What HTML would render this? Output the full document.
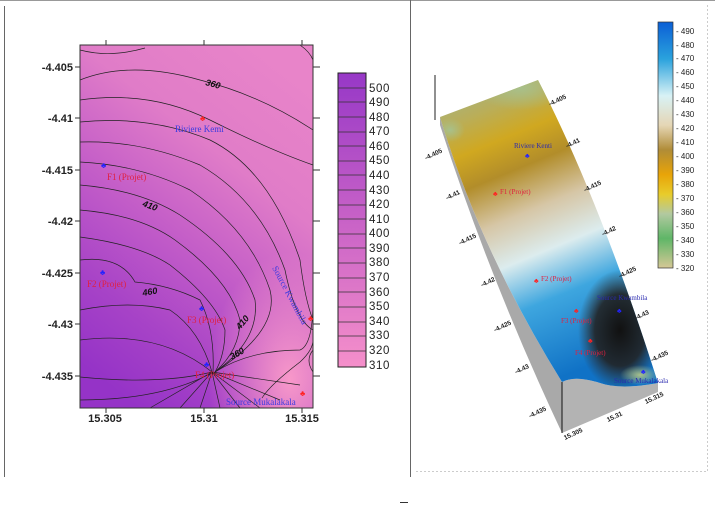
<!DOCTYPE html>
<html><head><meta charset="utf-8"><style>
html,body{margin:0;padding:0;background:#fff;width:715px;height:508px;overflow:hidden}
svg{display:block}
</style></head><body>
<svg width="715" height="508" viewBox="0 0 715 508" xmlns="http://www.w3.org/2000/svg" font-family="Liberation Sans, sans-serif">
<defs>
<linearGradient id="lg" x1="0.75" y1="0" x2="0.25" y2="1">
<stop offset="0" stop-color="#e884c9"/><stop offset="0.3" stop-color="#e07cc8"/><stop offset="0.55" stop-color="#c45ec8"/><stop offset="0.8" stop-color="#a743c7"/><stop offset="1" stop-color="#9533c7"/>
</linearGradient>
<radialGradient id="pk" cx="0.9" cy="0.92" r="0.35"><stop offset="0" stop-color="#f898c9"/><stop offset="1" stop-color="#f898c9" stop-opacity="0"/></radialGradient>
<linearGradient id="cb1" x1="0" y1="0" x2="0" y2="1">
<stop offset="0" stop-color="#9738c7"/><stop offset="0.5" stop-color="#c862c7"/><stop offset="1" stop-color="#f58fca"/>
</linearGradient>
<linearGradient id="cb2" x1="0" y1="0" x2="0" y2="1">
<stop offset="0" stop-color="#0b5fd6"/><stop offset="0.15" stop-color="#2aa2dd"/><stop offset="0.3" stop-color="#d8f2f5"/><stop offset="0.42" stop-color="#e5d6b5"/><stop offset="0.52" stop-color="#b08c37"/><stop offset="0.62" stop-color="#e8a408"/><stop offset="0.7" stop-color="#e8cc2a"/><stop offset="0.78" stop-color="#b2c9a0"/><stop offset="0.88" stop-color="#5fb667"/><stop offset="1" stop-color="#d5c896"/>
</linearGradient>
<linearGradient id="surf" x1="0.2" y1="0" x2="0.5" y2="1">
<stop offset="0" stop-color="#9fb58e"/><stop offset="0.12" stop-color="#b9ae5a"/><stop offset="0.22" stop-color="#d0a820"/><stop offset="0.32" stop-color="#b28d2a"/><stop offset="0.45" stop-color="#d6c6a6"/><stop offset="0.58" stop-color="#dcecee"/><stop offset="0.72" stop-color="#3ea6df"/><stop offset="0.95" stop-color="#1072c6"/>
</linearGradient>
<radialGradient id="dk" cx="0.5" cy="0.5" r="0.5"><stop offset="0" stop-color="#111"/><stop offset="0.6" stop-color="#222" stop-opacity="0.9"/><stop offset="1" stop-color="#333" stop-opacity="0"/></radialGradient>
<radialGradient id="gr" cx="0.5" cy="0.5" r="0.5"><stop offset="0" stop-color="#a8c08a"/><stop offset="1" stop-color="#a8c08a" stop-opacity="0"/></radialGradient>
<clipPath id="cs"><path d="M440,117 L538,80 Q600,200 658,383 Q620,390 600,383 Q575,375 562,382 Q480,250 440,117Z"/></clipPath>
</defs>
<line x1="0" y1="0.5" x2="715" y2="0.5" stroke="#999"/>
<line x1="4.5" y1="6" x2="4.5" y2="477" stroke="#666"/>
<line x1="410.5" y1="0" x2="410.5" y2="477" stroke="#666"/>
<line x1="400" y1="502.5" x2="408" y2="502.5" stroke="#333"/>
<path d="M416,471.5 H707 M707.5,5 V471" stroke="#ccc" stroke-dasharray="2,2" fill="none"/>
<rect x="80" y="45" width="233" height="363" fill="url(#lg)"/>
<rect x="80" y="45" width="233" height="363" fill="url(#pk)"/>
<g fill="none" stroke="#222" stroke-width="0.7">
<path d="M80,50 Q110,58 145,48"/>
<path d="M80,80 Q130,60 200,80 Q260,95 313,130"/>
<path d="M80,100 Q150,90 210,120 Q270,150 313,165"/>
<path d="M80,122 Q150,115 210,140 Q270,170 300,260 Q305,300 313,320"/>
<path d="M80,142 Q140,140 200,165 Q260,200 285,270 Q295,320 313,330"/>
<path d="M80,162 Q140,165 190,190 Q250,230 270,290 Q280,330 215,372"/>
<path d="M80,185 Q140,190 180,215 Q240,255 255,300 Q260,340 215,372"/>
<path d="M80,210 Q140,215 175,240 Q230,280 240,320 Q240,350 215,372"/>
<path d="M80,237 Q140,245 170,265 Q215,300 225,330 Q225,355 215,372"/>
<path d="M80,260 Q120,255 135,282 Q170,285 200,300 Q215,330 213,372"/>
<path d="M80,310 Q130,300 170,310 Q200,330 212,372"/>
<path d="M80,340 Q160,330 212,372"/>
<path d="M80,377 Q160,385 212,372"/>
<path d="M80,400 Q160,400 212,373"/>
<path d="M212,372 L150,408 M212,372 L180,408 M212,372 L200,408 M212,372 L220,408 M212,372 L240,408 M212,372 L260,408 M212,372 L280,400 M212,372 L300,385"/>
<path d="M215,372 Q250,350 300,350 Q313,345 313,300"/>
<path d="M300,45 Q310,52 313,60"/>
<path d="M313,350 Q305,360 313,372"/>
<path d="M262,398 Q270,385 300,362 Q313,350 313,340"/>
</g>
<rect x="80" y="45" width="233" height="363" fill="none" stroke="#333"/>
<g font-size="9" font-weight="bold" font-style="italic" fill="#111">
<text x="205" y="85" transform="rotate(15 205 85)">360</text>
<text x="142" y="206" transform="rotate(20 142 206)">410</text>
<text x="143" y="296" transform="rotate(-10 143 296)">460</text>
<text x="240" y="330" transform="rotate(-50 240 330)">410</text>
<text x="232" y="360" transform="rotate(-30 232 360)">360</text>
</g>
<g stroke="#333"><path d="M106,40 V45 M204,40 V45 M302,40 V45 M106,408 V413 M204,408 V413 M302,408 V413 M75,67 H80 M75,118 H80 M75,170 H80 M75,221 H80 M75,273 H80 M75,324 H80 M75,376 H80 M313,67 H320 M313,118 H320 M313,170 H320 M313,221 H320 M313,273 H320 M313,324 H320 M313,376 H320"/></g>
<g font-size="11" font-weight="bold" fill="#222" text-anchor="end">
<text x="73" y="71">-4.405</text><text x="73" y="122">-4.41</text><text x="73" y="174">-4.415</text><text x="73" y="225">-4.42</text><text x="73" y="277">-4.425</text><text x="73" y="328">-4.43</text><text x="73" y="380">-4.435</text>
</g>
<g font-size="11" font-weight="bold" fill="#222" text-anchor="middle">
<text x="105" y="422">15.305</text><text x="204" y="422">15.31</text><text x="302" y="422">15.315</text>
</g>
<g font-family="Liberation Serif, serif" font-size="9">
<text x="175" y="132" fill="#3a3ae0">Riviere Kemi</text>
<text x="107" y="180" fill="#e02040">F1 (Projet)</text>
<text x="87" y="287" fill="#e02040">F2 (Projet)</text>
<text x="187" y="323" fill="#e02040">F3 (Projet)</text>
<text x="195" y="378" fill="#e02040">F4 (Projet)</text>
<text x="226" y="405" fill="#3a3ae0">Source Mukalakala</text>
<text x="272" y="268" fill="#3a3ae0" transform="rotate(62 272 268)">Source Kwambila</text>
</g>
<g font-size="8"><text x="101" y="168" fill="#22f">♣</text><text x="100" y="275" fill="#22f">♣</text><text x="199" y="311" fill="#22f">♣</text><text x="204" y="367" fill="#22f">♣</text><text x="200" y="121" fill="#f22">♣</text><text x="300" y="396" fill="#f22">♣</text><text x="308" y="321" fill="#f22">♣</text></g>
<rect x="338" y="73" width="28" height="294" fill="url(#cb1)" stroke="#222"/>
<g stroke="#333" stroke-width="0.7">
<path d="M338,88H366M338,102H366M338,117H366M338,132H366M338,146H366M338,161H366M338,175H366M338,190H366M338,205H366M338,219H366M338,234H366M338,248H366M338,263H366M338,278H366M338,292H366M338,307H366M338,322H366M338,336H366M338,351H366"/>
</g>
<g font-size="11.5" fill="#222" letter-spacing="0.6">
<text x="369" y="92">500</text><text x="369" y="106">490</text><text x="369" y="121">480</text><text x="369" y="135">470</text><text x="369" y="150">460</text><text x="369" y="164">450</text><text x="369" y="179">440</text><text x="369" y="194">430</text><text x="369" y="208">420</text><text x="369" y="223">410</text><text x="369" y="237">400</text><text x="369" y="252">390</text><text x="369" y="266">380</text><text x="369" y="281">370</text><text x="369" y="296">360</text><text x="369" y="310">350</text><text x="369" y="325">340</text><text x="369" y="339">330</text><text x="369" y="354">320</text><text x="369" y="369">310</text>
</g>
<path d="M440,117 Q480,250 562,382 L562,433 Q490,280 440,125Z" fill="#a9a9a9"/>
<path d="M562,382 Q575,375 600,383 Q620,390 658,383 L658,392 L562,433Z" fill="#b3b3b3"/>
<line x1="562" y1="382" x2="562" y2="433" stroke="#111"/>
<g clip-path="url(#cs)">
<rect x="430" y="70" width="240" height="330" fill="url(#surf)"/>
<ellipse cx="620" cy="330" rx="42" ry="60" fill="url(#dk)"/>
<ellipse cx="640" cy="375" rx="20" ry="10" fill="url(#gr)"/>
<ellipse cx="520" cy="88" rx="45" ry="22" fill="url(#gr)"/>
<ellipse cx="450" cy="130" rx="15" ry="12" fill="url(#gr)"/>
</g>
<path d="M435,75 V120" stroke="#222"/>
<rect x="658" y="22" width="15" height="246" fill="url(#cb2)" stroke="#333" stroke-width="0.7"/>
<g font-size="8" fill="#222">
<text x="676" y="34">- 490</text><text x="676" y="48">- 480</text><text x="676" y="61">- 470</text><text x="676" y="75">- 460</text><text x="676" y="89">- 450</text><text x="676" y="103">- 440</text><text x="676" y="117">- 430</text><text x="676" y="131">- 420</text><text x="676" y="145">- 410</text><text x="676" y="159">- 400</text><text x="676" y="173">- 390</text><text x="676" y="187">- 380</text><text x="676" y="201">- 370</text><text x="676" y="215">- 360</text><text x="676" y="229">- 350</text><text x="676" y="243">- 340</text><text x="676" y="257">- 330</text><text x="676" y="271">- 320</text>
</g>
<g font-size="6.5" font-weight="bold" fill="#222">
<text x="426" y="160" transform="rotate(-25 426 160)">-4.405</text>
<text x="447" y="200" transform="rotate(-25 447 200)">-4.41</text>
<text x="460" y="245" transform="rotate(-25 460 245)">-4.415</text>
<text x="482" y="287" transform="rotate(-25 482 287)">-4.42</text>
<text x="495" y="332" transform="rotate(-25 495 332)">-4.425</text>
<text x="516" y="374" transform="rotate(-25 516 374)">-4.43</text>
<text x="530" y="418" transform="rotate(-25 530 418)">-4.435</text>
<text x="550" y="106" transform="rotate(-25 550 106)">-4.405</text>
<text x="567" y="148" transform="rotate(-25 567 148)">-4.41</text>
<text x="585" y="192" transform="rotate(-25 585 192)">-4.415</text>
<text x="603" y="236" transform="rotate(-25 603 236)">-4.42</text>
<text x="620" y="278" transform="rotate(-25 620 278)">-4.425</text>
<text x="636" y="320" transform="rotate(-25 636 320)">-4.43</text>
<text x="652" y="362" transform="rotate(-25 652 362)">-4.435</text>
<text x="565" y="440" transform="rotate(-25 565 440)">15.305</text>
<text x="608" y="422" transform="rotate(-25 608 422)">15.31</text>
<text x="646" y="404" transform="rotate(-25 646 404)">15.315</text>
</g>
<g font-family="Liberation Serif, serif" font-size="7">
<text x="514" y="148" fill="#2a2ab0">Riviere Kenti</text>
<text x="500" y="194" fill="#e02040">F1 (Projet)</text>
<text x="541" y="281" fill="#e02040">F2 (Projet)</text>
<text x="561" y="323" fill="#e02040">F3 (Projet)</text>
<text x="575" y="355" fill="#e02040">F4 (Projet)</text>
<text x="597" y="300" fill="#2a2ab0">Source Kwambila</text>
<text x="614" y="383" fill="#2a2ab0">Source Mukalakala</text>
</g>
<g font-size="7"><text x="525" y="158" fill="#22f">♣</text><text x="493" y="196" fill="#f22">♣</text><text x="534" y="283" fill="#f22">♣</text><text x="574" y="313" fill="#f22">♣</text><text x="588" y="343" fill="#f22">♣</text><text x="617" y="313" fill="#22f">♣</text><text x="641" y="374" fill="#22f">♣</text></g>
</svg>
</body></html>
